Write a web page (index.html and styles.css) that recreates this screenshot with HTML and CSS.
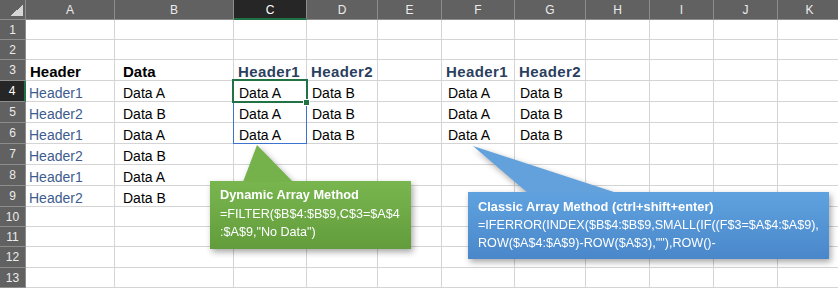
FILE: index.html
```html
<!DOCTYPE html>
<html lang="en">
<head>
    <meta charset="UTF-8">
    <meta name="viewport" content="width=device-width, initial-scale=1.0">
    <title>Filter by Header</title>
    <link rel="stylesheet" href="styles.css">
</head>
<body>
    <div class="sheet">
        <!-- column headers -->
        <div class="corner"></div>
        <div class="ch">A</div><div class="ch">B</div><div class="ch on">C</div><div class="ch">D</div>
        <div class="ch">E</div><div class="ch">F</div><div class="ch">G</div><div class="ch">H</div>
        <div class="ch">I</div><div class="ch">J</div><div class="ch">K</div>

        <!-- row 1 -->
        <div class="rh">1</div>
        <div class="c"></div><div class="c"></div><div class="c"></div><div class="c"></div><div class="c"></div>
        <div class="c"></div><div class="c"></div><div class="c"></div><div class="c"></div><div class="c"></div><div class="c"></div>

        <!-- row 2 -->
        <div class="rh">2</div>
        <div class="c"></div><div class="c"></div><div class="c"></div><div class="c"></div><div class="c"></div>
        <div class="c"></div><div class="c"></div><div class="c"></div><div class="c"></div><div class="c"></div><div class="c"></div>

        <!-- row 3 -->
        <div class="rh">3</div>
        <div class="c th">Header</div>
        <div class="c th col-b">Data</div>
        <div class="c th blue">Header1</div>
        <div class="c th blue">Header2</div>
        <div class="c"></div>
        <div class="c th blue">Header1</div>
        <div class="c th blue">Header2</div>
        <div class="c"></div><div class="c"></div><div class="c"></div><div class="c"></div>

        <!-- row 4 -->
        <div class="rh on">4</div>
        <div class="c key">Header1</div>
        <div class="c col-b">Data A</div>
        <div class="c out">Data A</div>
        <div class="c out">Data B</div>
        <div class="c"></div>
        <div class="c out-f">Data A</div>
        <div class="c out">Data B</div>
        <div class="c"></div><div class="c"></div><div class="c"></div><div class="c"></div>

        <!-- row 5 -->
        <div class="rh">5</div>
        <div class="c key">Header2</div>
        <div class="c col-b">Data B</div>
        <div class="c out">Data A</div>
        <div class="c out">Data B</div>
        <div class="c"></div>
        <div class="c out-f">Data A</div>
        <div class="c out">Data B</div>
        <div class="c"></div><div class="c"></div><div class="c"></div><div class="c"></div>

        <!-- row 6 -->
        <div class="rh">6</div>
        <div class="c key">Header1</div>
        <div class="c col-b">Data A</div>
        <div class="c out">Data A</div>
        <div class="c out">Data B</div>
        <div class="c"></div>
        <div class="c out-f">Data A</div>
        <div class="c out">Data B</div>
        <div class="c"></div><div class="c"></div><div class="c"></div><div class="c"></div>

        <!-- row 7 -->
        <div class="rh">7</div>
        <div class="c key">Header2</div>
        <div class="c col-b">Data B</div>
        <div class="c"></div><div class="c"></div><div class="c"></div><div class="c"></div>
        <div class="c"></div><div class="c"></div><div class="c"></div><div class="c"></div><div class="c"></div>

        <!-- row 8 -->
        <div class="rh">8</div>
        <div class="c key">Header1</div>
        <div class="c col-b">Data A</div>
        <div class="c"></div><div class="c"></div><div class="c"></div><div class="c"></div>
        <div class="c"></div><div class="c"></div><div class="c"></div><div class="c"></div><div class="c"></div>

        <!-- row 9 -->
        <div class="rh">9</div>
        <div class="c key">Header2</div>
        <div class="c col-b">Data B</div>
        <div class="c"></div><div class="c"></div><div class="c"></div><div class="c"></div>
        <div class="c"></div><div class="c"></div><div class="c"></div><div class="c"></div><div class="c"></div>

        <!-- row 10 -->
        <div class="rh">10</div>
        <div class="c"></div><div class="c"></div><div class="c"></div><div class="c"></div><div class="c"></div>
        <div class="c"></div><div class="c"></div><div class="c"></div><div class="c"></div><div class="c"></div><div class="c"></div>

        <!-- row 11 -->
        <div class="rh">11</div>
        <div class="c"></div><div class="c"></div><div class="c"></div><div class="c"></div><div class="c"></div>
        <div class="c"></div><div class="c"></div><div class="c"></div><div class="c"></div><div class="c"></div><div class="c"></div>

        <!-- row 12 -->
        <div class="rh">12</div>
        <div class="c"></div><div class="c"></div><div class="c"></div><div class="c"></div><div class="c"></div>
        <div class="c"></div><div class="c"></div><div class="c"></div><div class="c"></div><div class="c"></div><div class="c"></div>

        <!-- row 13 -->
        <div class="rh">13</div>
        <div class="c"></div><div class="c"></div><div class="c"></div><div class="c"></div><div class="c"></div>
        <div class="c"></div><div class="c"></div><div class="c"></div><div class="c"></div><div class="c"></div><div class="c"></div>

        <!-- spill range and active cell -->
        <div class="spill"></div>
        <div class="active"><span class="handle"></span></div>

        <!-- callouts -->
        <div class="note note-green">
            <div class="note-title">Dynamic Array Method</div>
            <div>=FILTER($B$4:$B$9,C$3=$A$4</div>
            <div>:$A$9,"No Data")</div>
        </div>
        <div class="note note-blue">
            <div class="note-title">Classic Array Method (ctrl+shift+enter)</div>
            <div>=IFERROR(INDEX($B$4:$B$9,SMALL(IF((F$3=$A$4:$A$9),</div>
            <div>ROW($A$4:$A$9)-ROW($A$3),""),ROW()-</div>
        </div>
    </div>
</body>
</html>
```

FILE: styles.css
```css
body, html {
    margin: 0;
    padding: 0;
    overflow: hidden;
    background: #fff;
    font-family: "Liberation Sans", Arial, sans-serif;
}
.sheet {
    position: relative;
    display: grid;
    grid-template-columns: 26px 89px 119px 73px 71px 64px 73px 71px 64px 64px 64px 64px;
    grid-template-rows: 20px 20px 20px 21px 21px 21px 21px 21px 21px 21px 20px 20px 21px 20px;
    width: 842px;
    height: 288px;
}

/* headers */
.corner, .ch, .rh {
    box-sizing: border-box;
    display: flex;
    align-items: center;
    justify-content: center;
    background: #616161;
    color: #ececec;
    font-size: 12px;
    border-right: 1px solid #8d8d8d;
    border-bottom: 1px solid #8d8d8d;
}
.ch {
    padding-top: 1px;
}
.corner {
    background: linear-gradient(to bottom right, transparent 50%, #d6d6d6 50%) no-repeat right 2px bottom 3px / 13px 11px, #616161;
}
.ch.on {
    background: #262626;
    color: #fff;
    border-bottom: 2px solid #217346;
}
.rh.on {
    background: #262626;
    color: #fff;
    border-right: 2px solid #217346;
}

/* cells */
.c {
    box-sizing: border-box;
    display: flex;
    align-items: flex-end;
    padding: 0 4px 1px 4px;
    border-right: 1px solid #d4d4d4;
    border-bottom: 1px solid #d4d4d4;
    font-size: 14px;
    line-height: 14px;
    white-space: nowrap;
    color: #000;
}
.col-b {
    padding-left: 8px;
}
.out {
    padding-left: 5px;
}
.out-f {
    padding-left: 6px;
}
.key {
    padding-left: 3px;
    color: #3d5c8e;
}
.th {
    font-weight: bold;
    font-size: 15px;
}
.th.blue {
    color: #2b3f5f;
    letter-spacing: 0.4px;
}

/* selection */
.spill {
    position: absolute;
    left: 233px;
    top: 80px;
    width: 74px;
    height: 64px;
    box-sizing: border-box;
    border: 1px solid #3c73cf;
}
.active {
    position: absolute;
    left: 232px;
    top: 79px;
    width: 76px;
    height: 24px;
    box-sizing: border-box;
    border: 2px solid #217346;
}
.handle {
    position: absolute;
    right: -4px;
    bottom: -5px;
    width: 7px;
    height: 7px;
    box-sizing: border-box;
    background: #217346;
    border: 1px solid #fff;
}

/* callouts */
.note {
    position: absolute;
    box-sizing: border-box;
    color: #fff;
    font-size: 12.6px;
    line-height: 18px;
    white-space: nowrap;
    filter: drop-shadow(2px 3px 3px rgba(0, 0, 0, 0.35));
}
.note::before {
    content: "";
    position: absolute;
}
.note-title {
    font-weight: bold;
    font-size: 12.8px;
}
.note-green {
    left: 210px;
    top: 181px;
    width: 201px;
    height: 68px;
    padding: 5px 10px;
    line-height: 18.5px;
    background: linear-gradient(#79b64f, #629c3c);
}
.note-green::before {
    left: 33px;
    top: -36px;
    width: 50px;
    height: 37px;
    background: #75b24b;
    clip-path: polygon(28% 0, 0 100%, 100% 100%);
}
.note-blue {
    left: 468px;
    top: 192px;
    width: 361px;
    height: 67px;
    padding: 6px 10px;
    background: linear-gradient(#60a2df, #4987ca);
}
.note-blue::before {
    left: 5px;
    top: -46px;
    width: 144px;
    height: 47px;
    background: #62a1dc;
    clip-path: polygon(0 0, 38.2% 100%, 100% 100%);
}
```
